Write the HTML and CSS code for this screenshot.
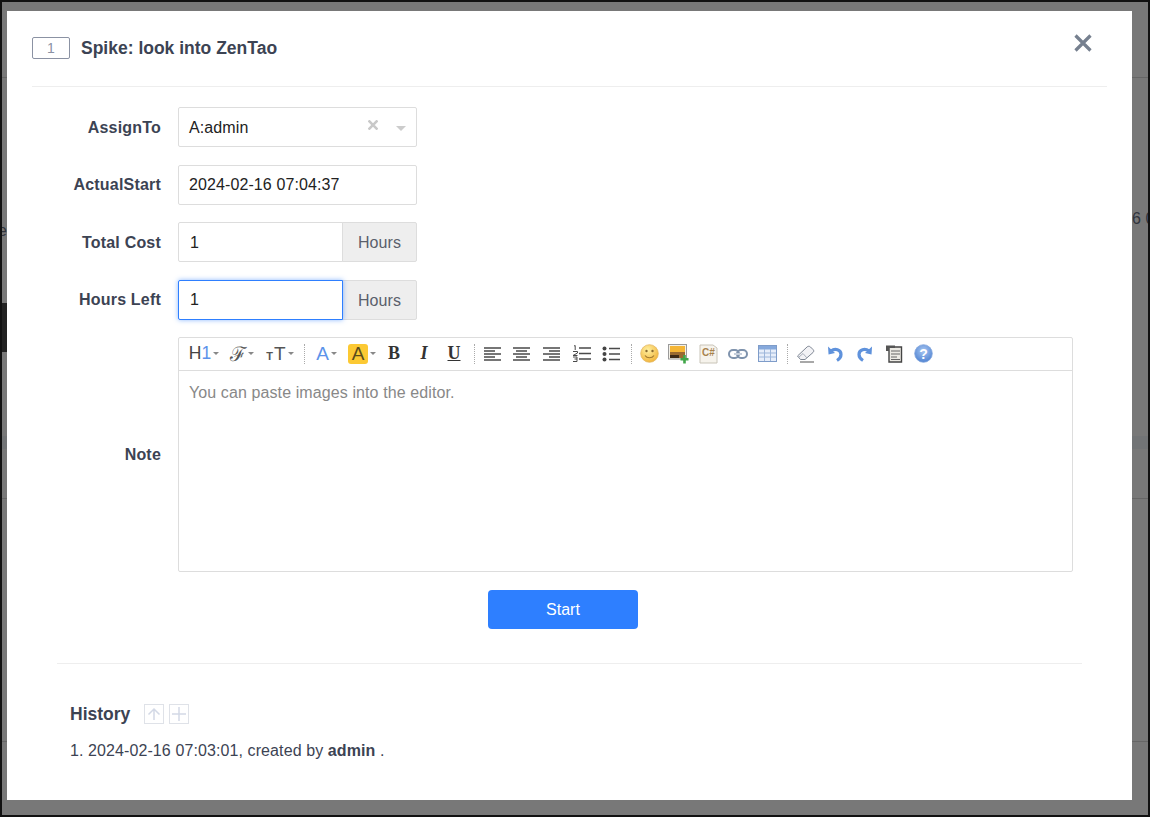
FILE: index.html
```html
<!DOCTYPE html>
<html lang="en">
<head>
<meta charset="utf-8">
<title>Spike: look into ZenTao</title>
<link rel="stylesheet" href="styles.css">
</head>
<body>
<div class="screen">
  <div class="behind" aria-hidden="true">
    <div class="bg-line bg-l1"></div>
    <div class="bg-line bg-l2"></div>
    <div class="bg-line bg-l3"></div>
    <div class="bg-band"></div>
    <div class="bg-dark"></div>
    <div class="bg-text bg-t1">6 0</div>
    <div class="bg-text bg-t2">e</div>
  </div>
  <main class="modal">
    <header class="head">
      <span class="id-box">1</span>
      <h1 class="title">Spike: look into ZenTao</h1>
      <svg class="close" width="20" height="20" viewBox="0 0 20 20"><path d="M2.5 2.5 17.5 17.5M17.5 2.5 2.5 17.5" stroke="#76808f" stroke-width="3.2" fill="none"/></svg>
    </header>
    <form class="form">
      <div class="row">
        <div class="label">AssignTo</div>
        <div class="control field select"><span class="grow">A:admin</span>
          <svg class="sel-x" width="10" height="10" viewBox="0 0 10 10"><path d="M.5 .5 9.500 9.500M9.500 .5 .5 9.500" stroke="#c9c9c9" stroke-width="2.600"/></svg>
          <span class="sel-caret"></span>
        </div>
      </div>
      <div class="row">
        <div class="label">ActualStart</div>
        <div class="control field">2024-02-16 07:04:37</div>
      </div>
      <div class="row">
        <div class="label">Total Cost</div>
        <div class="control group">
          <div class="field in">1</div><div class="addon">Hours</div>
        </div>
      </div>
      <div class="row">
        <div class="label">Hours Left</div>
        <div class="control group">
          <div class="field in focus">1</div><div class="addon addon-low">Hours</div>
        </div>
      </div>
      <div class="row row-editor">
        <div class="label">Note</div>
        <div class="editor">
          <div class="toolbar">
            <span class="cell wide"><span class="tx-h">H<span class="blue">1</span></span><i class="caret"></i></span>
            <span class="cell wide"><span class="tx-f">ℱ</span><i class="caret"></i></span>
            <span class="cell wide"><span class="tx-tt"><small>T</small>T</span><i class="caret"></i></span>
            <span class="sep"></span>
            <span class="cell a1"><span class="tx-a blue">A</span><i class="caret"></i></span>
            <span class="cell a2"><span class="tx-a hl">A</span><i class="caret"></i></span>
            <span class="cell b3"><b class="tx-b">B</b></span>
            <span class="cell b3"><i class="tx-i">I</i></span>
            <span class="cell b3"><u class="tx-u">U</u></span>
            <span class="sep"></span>
            <span class="cell"><svg width="18" height="16" viewBox="0 0 18 16"><path d="M0 2H17M0 5H11M0 8H17M0 11H11M0 14H17" stroke="#4a4a4a" stroke-width="1.400"/></svg></span>
            <span class="cell"><svg width="18" height="16" viewBox="0 0 18 16"><path d="M0 2H17M3 5H14M0 8H17M3 11H14M0 14H17" stroke="#4a4a4a" stroke-width="1.400"/></svg></span>
            <span class="cell"><svg width="18" height="16" viewBox="0 0 18 16"><path d="M0 2H17M6 5H17M0 8H17M6 11H17M0 14H17" stroke="#4a4a4a" stroke-width="1.400"/></svg></span>
            <span class="cell"><svg width="19" height="17" viewBox="0 0 19 17"><path d="M7 3H19M7 8.500H19M7 14H19" stroke="#4a4a4a" stroke-width="1.600"/><path d="M2 1 3.200 .5V5M1 6.500H5.500V8L1 10.500H5.500M1 12H5V14H2.500M5 14V16.500H1" stroke="#4a4a4a" stroke-width="1" fill="none"/></svg></span>
            <span class="cell"><svg width="18" height="16" viewBox="0 0 18 16"><circle cx="2.500" cy="2.500" r="2" fill="#444"/><circle cx="2.500" cy="8" r="2" fill="#444"/><circle cx="2.500" cy="13.500" r="2" fill="#444"/><path d="M7 2.500H18M7 8H18M7 13.500H18" stroke="#4a4a4a" stroke-width="1.600"/></svg></span>
            <span class="sep"></span>
            <span class="cell"><svg width="19" height="19" viewBox="0 0 19 19"><defs><radialGradient id="sm" cx=".4" cy=".3" r=".8"><stop offset="0" stop-color="#fff0a0"/><stop offset="1" stop-color="#f0ae30"/></radialGradient></defs><circle cx="9.500" cy="9.500" r="8.800" fill="url(#sm)" stroke="#e3b862" stroke-width=".8"/><circle cx="6.500" cy="7" r="1.200" fill="#8a6a30"/><circle cx="12.500" cy="7" r="1.200" fill="#8a6a30"/><path d="M5 11.500C7 14.500 12 14.500 14 11.500" stroke="#a27a30" stroke-width="1.200" fill="none"/></svg></span>
            <span class="cell"><svg width="21" height="20" viewBox="0 0 21 20"><rect x=".5" y=".5" width="18" height="14.500" fill="#f4f1e8" stroke="#9a9a9a"/><rect x="2" y="2" width="15" height="6" fill="#f5b636"/><rect x="2" y="8" width="15" height="6" fill="#9a6a30"/><rect x="2" y="11" width="9" height="3" fill="#3d2a18"/><path d="M16.500 11V19.500M12.500 15.200H20.500" stroke="#3fa648" stroke-width="2.600"/></svg></span>
            <span class="cell"><svg width="19" height="20" viewBox="0 0 19 20"><path d="M1 1H14L18 4V19H1Z" fill="#f6f3ec" stroke="#c9c4b8"/><text class="svg-code" x="3" y="12">C#</text></svg></span>
            <span class="cell"><svg width="20" height="12" viewBox="0 0 20 12"><rect x="1" y="2" width="10" height="8" rx="4" fill="none" stroke="#7f93ad" stroke-width="2"/><rect x="9" y="2" width="10" height="8" rx="4" fill="none" stroke="#7f93ad" stroke-width="2"/><path d="M6 6H14" stroke="#c6cfdb" stroke-width="2"/></svg></span>
            <span class="cell"><svg width="19" height="17" viewBox="0 0 19 17"><rect x=".5" y=".5" width="18" height="16" fill="#e7eefa" stroke="#7e9cc9"/><rect x="1" y="1" width="17" height="3.500" fill="#86a9dc"/><path d="M1 8H18M1 12H18M6.500 4V16M12.500 4V16" stroke="#9db6da"/></svg></span>
            <span class="sep"></span>
            <span class="cell"><svg width="19" height="19" viewBox="0 0 19 19"><path d="M1.500 12 11 3C12 2 13.500 2 14.500 3L17 5.500C18 6.500 18 7.500 17 8.500L9 15.500H4.500Z" fill="#f3f3f6" stroke="#7f8794"/><path d="M3 13 7 9.500 11 14" fill="none" stroke="#aab0bb"/><path d="M4 18H18" stroke="#6d6d6d" stroke-width="1.200"/></svg></span>
            <span class="cell"><svg width="17" height="17" viewBox="0 0 17 17"><path d="M4 6C8 3 14 4.500 14 9.500C14 12 12.500 14 10 15.500" fill="none" stroke="#5f92dc" stroke-width="3.200"/><path d="M1 1.500 1.500 9.500 8 8Z" fill="#5f92dc"/></svg></span>
            <span class="cell"><svg width="17" height="17" viewBox="0 0 17 17"><path d="M13 6C9 3 3 4.500 3 9.500C3 12 4.500 14 7 15.500" fill="none" stroke="#5f92dc" stroke-width="3.200"/><path d="M16 1.500 15.500 9.500 9 8Z" fill="#5f92dc"/></svg></span>
            <span class="cell"><svg width="18" height="19" viewBox="0 0 18 19"><path d="M4 3H16.500V18H4Z" fill="#eceae4" stroke="#444" stroke-width="1.400"/><path d="M1 1.500H10V4H4V7H1Z" fill="#555"/><path d="M6 7H15M6 10H15M6 13H12M6 15.500H15" stroke="#666"/></svg></span>
            <span class="cell"><svg width="19" height="19" viewBox="0 0 19 19"><defs><radialGradient id="hp" cx=".5" cy=".35" r=".7"><stop offset="0" stop-color="#a9c7f2"/><stop offset="1" stop-color="#4a7fd0"/></radialGradient></defs><circle cx="9.500" cy="9.500" r="8.800" fill="url(#hp)" stroke="#7fa3dc" stroke-width=".8"/><text class="svg-help" x="9.500" y="14.500">?</text></svg></span>
          </div>
          <div class="editor-body">You can paste images into the editor.</div>
        </div>
      </div>
      <div class="actions"><button class="start" type="button">Start</button></div>
    </form>
    <section class="history">
      <div class="hist-head">
        <h2 class="hist-title">History</h2>
        <span class="hist-btn"><svg width="14" height="14" viewBox="0 0 14 14"><path d="M7 13V2M1.500 7.500 7 2 12.500 7.500" fill="none" stroke="#d3d9e6" stroke-width="1.500"/></svg></span>
        <span class="hist-btn"><svg width="14" height="14" viewBox="0 0 14 14"><path d="M7 0V14M0 7H14" stroke="#d3d9e6" stroke-width="1.500"/></svg></span>
      </div>
      <ol class="hist-list"><li>2024-02-16 07:03:01, created by <strong>admin</strong> .</li></ol>
    </section>
  </main>
</div>
</body>
</html>
```
FILE: styles.css
```css
* { box-sizing: border-box; }
html, body { margin: 0; padding: 0; }
body {
  font-family: "Liberation Sans", Arial, sans-serif;
  font-size: 16px;
  letter-spacing: .1px;
  color: #3c4353;
  background: #111;
}
.screen {
  position: relative;
  width: 1150px;
  height: 817px;
  overflow: hidden;
  border: 2px solid #111;
  background: #787878;
  padding: 9px 16px 15px 5px;
}
.behind { position: absolute; inset: 0; }
.bg-line { position: absolute; left: 0; right: 0; height: 1px; background: #666; }
.bg-l1 { top: 75px; }
.bg-l2 { top: 496px; }
.bg-l3 { top: 739px; }
.bg-band { position: absolute; left: 0; right: 0; top: 434px; height: 13px; background: #727476; }
.bg-dark { position: absolute; left: 0; top: 301px; width: 6px; height: 49px; background: #222; }
.bg-text { position: absolute; color: #30343d; font-size: 16px; white-space: nowrap; }
.bg-t1 { left: 1130px; top: 208px; }
.bg-t2 { left: -4px; top: 220px; }
.modal {
  position: relative;
  height: 789px;
  background: #fff;
  padding: 0 25px;
}
.head {
  height: 76px;
  display: flex;
  align-items: center;
  border-bottom: 1px solid #eee;
  padding-bottom: 2px;
}
.id-box {
  width: 38px;
  height: 22px;
  border: 1px solid #8b92a3;
  border-radius: 2px;
  color: #8b92a3;
  font-size: 14px;
  line-height: 20px;
  text-align: center;
  margin-right: 11px;
}
.title { flex: 1; margin: 0; padding-top: 1px; font-size: 17.500px; line-height: 24px; font-weight: 700; letter-spacing: 0; color: #3c4353; }
.close { margin: -10px 14px 0 0; }
.form { display: flex; flex-direction: column; gap: 17.5px; padding: 20px 34px 0 0; }
.row { display: flex; align-items: center; }
.label {
  width: 129px;
  margin-right: 17px;
  padding-top: 1px;
  text-align: right;
  font-weight: 700;
  font-size: 16px;
  letter-spacing: .2px;
  color: #3c4353;
}
.control { width: 239px; height: 40px; }
.field {
  height: 40px;
  border: 1px solid #ddd;
  border-radius: 2px;
  padding: 1px 10px 0;
  display: flex;
  align-items: center;
  color: #222;
  background: #fff;
}
.grow { flex: 1; }
.sel-x { margin: -5px 18px 0 0; }
.sel-caret {
  width: 0; height: 0;
  margin: 2px 0 0;
  border: 5px solid transparent;
  border-top-color: #ccc;
  border-bottom: 0;
}
.group { display: flex; }
.in { width: 165px; padding: 1px 11px 0; border-radius: 2px 0 0 2px; flex: none; }
.focus {
  position: relative;
  border-color: #2e7fff;
  box-shadow: 0 0 5px rgba(46, 127, 255, .55);
}
.addon {
  flex: 1;
  margin-left: -1px;
  padding-top: 1px;
  border: 1px solid #ddd;
  border-radius: 0 2px 2px 0;
  background: #eee;
  color: #5a5f6b;
  display: flex;
  align-items: center;
  justify-content: center;
}
.addon-low { padding-top: 3px; }
.editor {
  width: 895px;
  height: 235px;
  border: 1px solid #ddd;
  border-radius: 2px;
  display: flex;
  flex-direction: column;
}
.toolbar {
  height: 33px;
  flex: none;
  border-bottom: 1px solid #ddd;
  display: flex;
  align-items: center;
  padding: 0 0 1px 6px;
  letter-spacing: 0;
}
.cell { width: 29.500px; height: 24px; display: flex; align-items: center; justify-content: center; flex: none; }
.cell.wide { width: 38px; }
.cell.wide:last-of-type { width: 37px; }
.cell.a1 { width: 37px; }
.cell.a2 { width: 34px; }
.cell.b3 { width: 30px; }
.sep { width: 1px; height: 20px; margin: 0 3px 0 5px; border-left: 1px dotted #aaa; flex: none; }
.caret {
  width: 0; height: 0;
  margin-left: 2px;
  border: 3.500px solid transparent;
  border-top-color: #888;
  border-bottom: 0;
}
.blue { color: #5c93ea; }
.tx-h { font-size: 17.500px; color: #444; }
.tx-f { font-family: "DejaVu Serif", "Liberation Serif", serif; font-size: 20px; color: #555; }
.tx-tt { font-size: 19px; color: #555; }
.tx-tt small { font-size: 11px; font-weight: 700; margin-right: 1px; }
.tx-a { font-size: 19px; line-height: 20px; }
.hl { background: #fcc933; color: #5a4c1c; border-radius: 3px; width: 20px; height: 20px; text-align: center; }
.tx-b, .tx-i, .tx-u { font-family: "Liberation Serif", serif; font-weight: 700; font-size: 18px; color: #333; }
.tx-i { font-style: italic; }
.svg-code { font-family: "Liberation Sans", sans-serif; font-size: 10px; font-weight: 700; fill: #a8824c; }
.svg-help { font-family: "Liberation Sans", sans-serif; font-size: 14px; font-weight: 700; fill: #fff; text-anchor: middle; }
.editor-body { flex: 1; padding: 13px 10px; color: #888; line-height: 18px; }
.actions { display: flex; justify-content: center; padding-left: 21px; }
.start {
  width: 150px;
  height: 39px;
  padding: 2px 0 0;
  border: 0;
  border-radius: 4px;
  background: #2e7fff;
  color: #fff;
  font: inherit;
}
.history { margin: 34px -9px 0 25px; border-top: 1px solid #eee; padding: 40px 13px 0; width: 1025px; }
.hist-head { display: flex; align-items: center; height: 22px; }
.hist-title { margin: 0 14px 0 0; font-size: 17.500px; font-weight: 700; letter-spacing: 0; color: #3c4353; }
.hist-btn {
  width: 20px; height: 20px;
  margin: -2px 5px 0 0;
  border: 1px solid #dfe2e8;
  display: flex;
  align-items: center;
  justify-content: center;
}
.hist-list { margin: 15px 0 0; padding: 0 0 0 18px; line-height: 20px; color: #3c4353; }
.hist-list strong { font-weight: 700; }
```
